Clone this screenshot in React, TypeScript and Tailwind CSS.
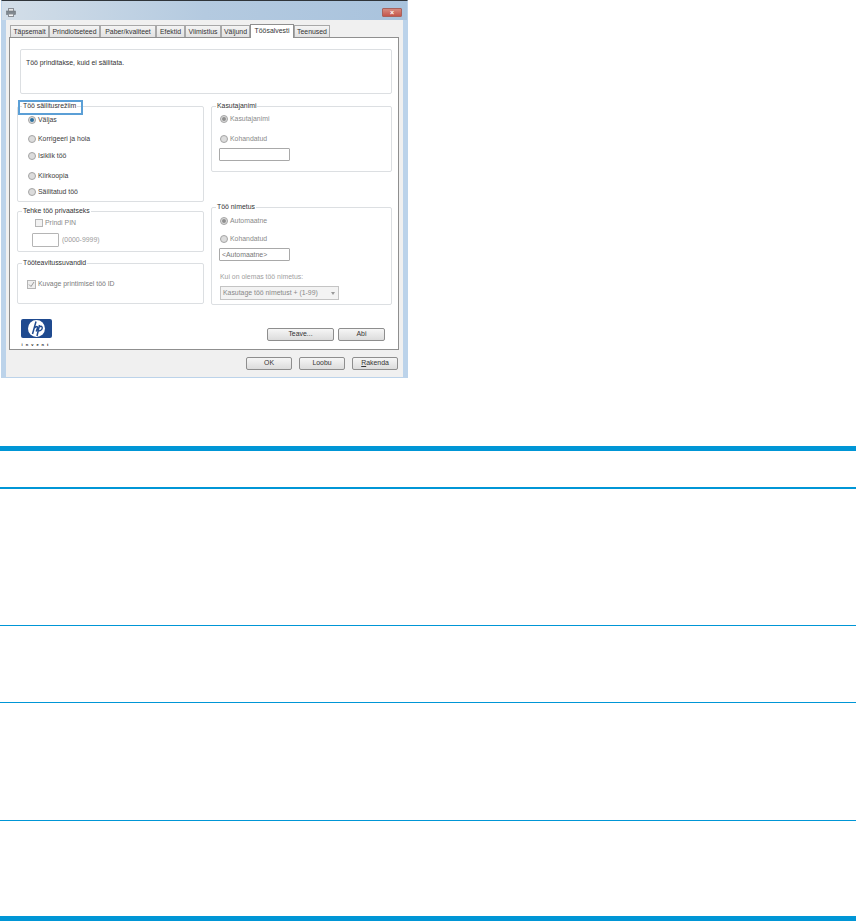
import type { ReactNode } from 'react';

const Radio = ({ on, dim, label, className = '' }: { on?: boolean; dim?: boolean; label: string; className?: string }) => (
  <div className={`flex items-center gap-[2px] text-[6.9px] leading-[10px] ${dim ? 'text-[#8a8a8a]' : 'text-[#3c3c3c]'} ${className}`}>
    <span className="w-[8px] h-[8px] rounded-full border border-[#a5a5a5] bg-[#dcdcdc] flex items-center justify-center shrink-0">
      {on && <span className={`w-[4px] h-[4px] rounded-full ${dim ? 'bg-[#8f8f8f]' : 'bg-[#2b6f9e]'}`} />}
    </span>
    {label}
  </div>
);

const Group = ({ title, className = '', children }: { title: string; className?: string; children: ReactNode }) => (
  <div className={`relative border border-[#dcdfe2] rounded-[2px] ${className}`}>
    <span className="absolute left-[4px] top-[-6px] bg-white px-[1px] text-[6.9px] leading-[10px] text-[#333]">{title}</span>
    {children}
  </div>
);

const Btn = ({ label, className = '' }: { label: ReactNode; className?: string }) => (
  <div className={`h-[13px] border border-[#8e8e8e] rounded-[2px] bg-gradient-to-b from-[#f6f6f6] to-[#dcdcdc] flex items-center justify-center text-[6.9px] text-[#333] ${className}`}>
    {label}
  </div>
);

const Tab = ({ label, className = '' }: { label: string; className?: string }) => (
  <div className={`h-[12px] border border-b-0 border-[#a8a8a8] bg-gradient-to-b from-[#f4f4f4] to-[#e2e2e2] text-center text-[6.9px] leading-[12px] text-[#333] whitespace-nowrap ${className}`}>
    {label}
  </div>
);

const Dialog = () => (
  <div className="ml-[1px] w-[407px] h-[378px] border border-[#bcd3ea] border-t-[#2f3439] bg-[#bcd3ea] px-[4px] flex flex-col font-['Liberation_Sans',Arial,sans-serif]">
    <div className="h-[19px] shrink-0 -mx-[4px] px-[4px] bg-gradient-to-r from-[#d3dee8] via-[#b4cae0] to-[#a9c3dd] flex items-end justify-between pb-[3px] pr-[5px]">
      <svg width="10" height="9" viewBox="0 0 10 9">
        <rect x="2.5" y="0.5" width="5" height="3" fill="#e6e6e6" stroke="#8a8f96" />
        <rect x="0.5" y="3" width="9" height="3.5" fill="#7f878e" stroke="#70777e" strokeWidth="0.6" />
        <rect x="2.5" y="6" width="5" height="2.5" fill="#f4f4f4" stroke="#8a8f96" />
      </svg>
      <div className="w-[20px] h-[9px] rounded-[1px] bg-gradient-to-b from-[#d68a80] to-[#c4564c] border border-[#a8625c] flex items-center justify-center text-white text-[7px] font-bold leading-none">×</div>
    </div>
    <div className="flex-1 bg-[#f0f0f0] flex flex-col px-[3px]">
      <div className="h-[17px] shrink-0 flex items-end pl-[1px]">
        <Tab label="Täpsemalt" className="w-[39px]" />
        <Tab label="Prindiotseteed" className="w-[51px]" />
        <Tab label="Paber/kvaliteet" className="w-[56px]" />
        <Tab label="Efektid" className="w-[29px]" />
        <Tab label="Viimistlus" className="w-[36px]" />
        <Tab label="Väljund" className="w-[29px]" />
        <div className="relative top-[1px] w-[44px] h-[14px] border border-b-0 border-[#8f8f8f] bg-white text-center text-[6.9px] leading-[11px] text-[#333]">Töösalvesti</div>
        <Tab label="Teenused" className="w-[36px]" />
      </div>
      <div className="h-[313px] mr-[1px] border border-[#8f8f8f] bg-white pl-[7px] pr-[6px] pt-[11px] flex flex-col">
        <div className="ml-[3px] w-[372px] h-[45px] border border-[#dcdfe2] rounded-[2px] px-[5px] pt-[8px] text-[6.9px] leading-[10px] text-[#333]">
          Töö prinditakse, kuid ei säilitata.
        </div>
        <div className="mt-[12px] flex gap-[7px]">
          <div className="w-[187px] flex flex-col">
            <Group title="Töö säilitusrežiim" className="h-[96px] pl-[10px] pt-[8px]">
              <span className="absolute left-0 top-[-7px] w-[65px] h-[15px] border-2 border-[#5b9fd6]" />
              <Radio on label="Väljas" />
              <Radio label="Korrigeeri ja hoia" className="mt-[9px]" />
              <Radio label="Isiklik töö" className="mt-[7px]" />
              <Radio label="Kiirkoopia" className="mt-[10px]" />
              <Radio label="Säilitatud töö" className="mt-[6px]" />
            </Group>
            <Group title="Tehke töö privaatseks" className="h-[41px] mt-[9px] pl-[17px] pt-[6px]">
              <div className="flex items-center gap-[2px] text-[6.9px] leading-[10px] text-[#8a8a8a]">
                <span className="w-[8px] h-[8px] border border-[#b5b5b5] bg-[#f2f2f2]" />
                Prindi PIN
              </div>
              <div className="mt-[5px] -ml-[3px] flex items-center gap-[3px] text-[6.9px] leading-[10px] text-[#9a9a9a]">
                <span className="w-[27px] h-[14px] border border-[#b5b5b5] rounded-[1px]" />
                (0000-9999)
              </div>
            </Group>
            <Group title="Tööteavitussuvandid" className="h-[41px] mt-[11px] pl-[9px] pt-[15px]">
              <div className="flex items-center gap-[2px] text-[6.9px] leading-[10px] text-[#7a7a7a]">
                <span className="w-[9px] h-[9px] border border-[#b5b5b5] bg-[#eee] flex items-center justify-center">
                  <svg width="7" height="7" viewBox="0 0 7 7"><path d="M1 3.5 L3 5.5 L6 1" fill="none" stroke="#9a9a9a" strokeWidth="1" /></svg>
                </span>
                Kuvage printimisel töö ID
              </div>
            </Group>
          </div>
          <div className="w-[181px] flex flex-col">
            <Group title="Kasutajanimi" className="h-[66px] pl-[8px] pt-[7px]">
              <Radio on dim label="Kasutajanimi" />
              <Radio dim label="Kohandatud" className="mt-[10px]" />
              <div className="mt-[4px] -ml-[1px] w-[71px] h-[13px] border border-[#a9a9a9] rounded-[1px]" />
            </Group>
            <Group title="Töö nimetus" className="h-[98px] mt-[35px] pl-[8px] pt-[8px]">
              <Radio on dim label="Automaatne" />
              <Radio dim label="Kohandatud" className="mt-[8px]" />
              <div className="mt-[4px] -ml-[1px] w-[71px] h-[13px] border border-[#a9a9a9] rounded-[1px] px-[2px] text-[6.9px] leading-[11px] text-[#777]">&lt;Automaatne&gt;</div>
              <div className="mt-[11px] text-[6.9px] leading-[10px] text-[#a0a0a0]">Kui on olemas töö nimetus:</div>
              <div className="mt-[4px] w-[119px] h-[14px] border border-[#c4c4c4] bg-[#f3f3f3] flex items-center justify-between px-[2px] text-[6.9px] text-[#888]">
                Kasutage töö nimetust + (1-99)
                <span className="w-0 h-0 mr-[1px] border-x-[2.5px] border-x-transparent border-t-[3px] border-t-[#999]" />
              </div>
            </Group>
          </div>
        </div>
        <div className="mt-[14px] flex items-start justify-between pl-[4px] pr-[5px]">
          <div className="w-[31px] flex flex-col items-center">
            <svg width="31" height="19" viewBox="0 0 31 19">
              <rect width="31" height="19" rx="2" fill="#1f4a8f" />
              <ellipse cx="15.5" cy="9.5" rx="8.5" ry="8.5" fill="#fff" />
              <path d="M15 2.5 L11.5 15 M13.5 9 Q16.5 6 16.5 9 L15.2 12.5 M18.5 6 L16 17 M18 8 Q22 6 21 10 Q20 12 17.5 12" fill="none" stroke="#1f4a8f" strokeWidth="1.5" />
            </svg>
            <span className="mt-[4px] text-[4px] leading-[5px] font-bold tracking-[3px] text-[#222]">invent</span>
          </div>
          <div className="flex gap-[4px] mt-[9px] mr-[2px]">
            <Btn label="Teave..." className="w-[67px]" />
            <Btn label="Abi" className="w-[47px]" />
          </div>
        </div>
      </div>
      <div className="flex justify-end gap-[7px] pt-[7px] pr-[2px]">
        <Btn label="OK" className="w-[46px]" />
        <Btn label="Loobu" className="w-[46px]" />
        <Btn label={<span><u>R</u>akenda</span>} className="w-[46px]" />
      </div>
    </div>
  </div>
);

export default function App() {
  return (
    <div className="w-[856px] h-[921px] bg-white overflow-hidden flex flex-col">
      <Dialog />
      <div className="mt-[68px] h-[5px] bg-[#0096d6]" />
      <div className="mt-[36px] h-[2px] bg-[#0096d6]" />
      <div className="mt-[136px] h-px bg-[#0096d6]" />
      <div className="mt-[76px] h-px bg-[#0096d6]" />
      <div className="mt-[117px] h-px bg-[#0096d6]" />
      <div className="mt-[95px] h-[5px] bg-[#0096d6]" />
    </div>
  );
}
